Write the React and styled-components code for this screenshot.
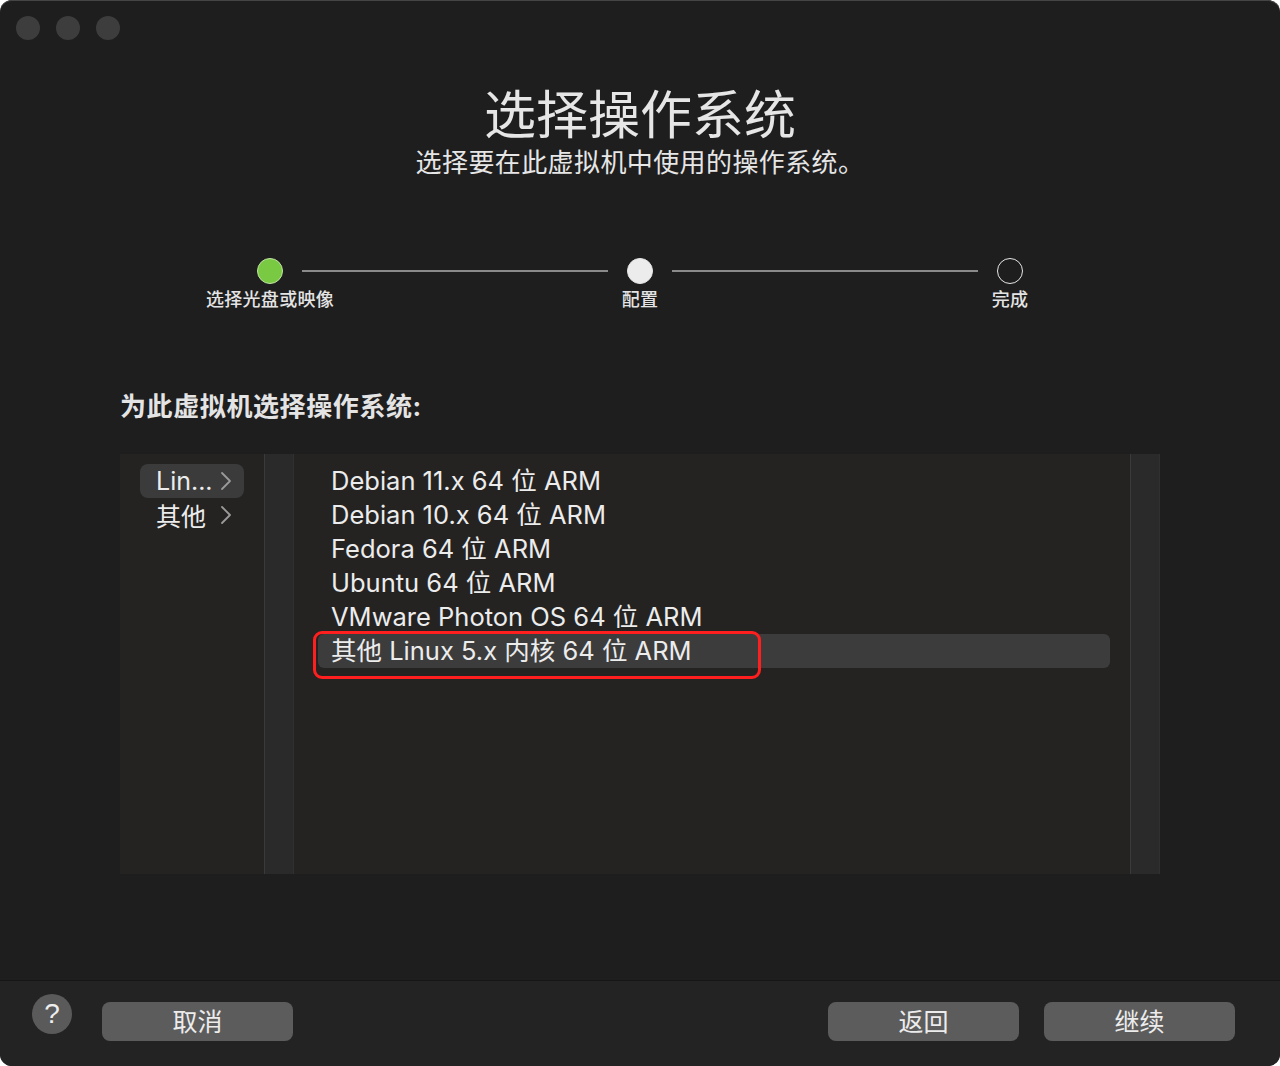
import React from "react";
import styled, { createGlobalStyle } from "styled-components";

const Global = createGlobalStyle`
  html, body { margin: 0; padding: 0; background: #ffffff; }
  body { font-family: Inter, "Noto Sans CJK SC", sans-serif; }
  * { box-sizing: border-box; }
`;

const Window = styled.div`
  width: 1280px;
  height: 1066px;
  background: #1e1e1e;
  border-radius: 12px;
  box-shadow: inset 0 1px 0 #454545;
  overflow: hidden;
  display: flex;
  flex-direction: column;
  color: #e4e4e4;
  font-family: Inter, "Noto Sans CJK SC", sans-serif;
`;

const TitleBar = styled.div`
  display: flex;
  gap: 16px;
  padding: 16px 0 0 16px;
  height: 56px;
`;

const Light = styled.span`
  width: 24px;
  height: 24px;
  border-radius: 50%;
  background: #3d3d3d;
`;

const Header = styled.div`
  display: flex;
  flex-direction: column;
  align-items: center;
  margin-top: 30px;
`;

const Title = styled.h1`
  margin: 0;
  font-size: 52px;
  line-height: 60px;
  font-weight: 400;
  color: #e6e6e6;
`;

const Subtitle = styled.div`
  font-size: 26px;
  line-height: 34px;
  letter-spacing: 0.4px;
  color: #e6e6e6;
`;

const Stepper = styled.div`
  width: 766px;
  margin: 78px auto 0;
  display: grid;
  grid-template-columns: 26px 1fr 26px 1fr 26px;
  row-gap: 4px;
`;

const Dot = styled.span`
  width: 26px;
  height: 26px;
  border-radius: 50%;
  background: ${(p) => (p.$state === "done" ? "#7ac943" : p.$state === "active" ? "#ececec" : "transparent")};
  border: 1.5px solid ${(p) => (p.$state === "done" ? "#bfe3a3" : "#e6e6e6")};
`;

const Line = styled.span`
  align-self: center;
  height: 2px;
  margin: 0 19px;
  background: #8a8a8a;
`;

const StepLabel = styled.span`
  display: flex;
  justify-content: center;
  white-space: nowrap;
  font-size: 18px;
  line-height: 24px;
  letter-spacing: 0.3px;
  font-weight: 500;
  color: #e4e4e4;
  grid-column: ${(p) => p.$col};
`;

const Heading = styled.div`
  width: 1040px;
  margin: 78px auto 0;
  font-size: 26px;
  line-height: 34px;
  letter-spacing: 0.6px;
  font-weight: 700;
  color: #e4e4e4;
`;

const Panel = styled.div`
  width: 1040px;
  height: 420px;
  margin: 30px auto 0;
  background: #242322;
  display: grid;
  grid-template-columns: 144px 30px 1fr 30px;
`;

const Sidebar = styled.div`
  padding: 10px 20px 0;
  display: flex;
  flex-direction: column;
`;

const SideItem = styled.div`
  width: 104px;
  height: 34px;
  padding: 0 12px 1px 16px;
  border-radius: 8px;
  display: flex;
  align-items: center;
  justify-content: space-between;
  font-size: 25px;
  background: ${(p) => (p.$selected ? "#3b3b3b" : "transparent")};
  color: #ececec;
`;

const Gutter = styled.div`
  background: #2a2a2a;
  border-left: 1px solid #3a3a3a;
  border-right: 1px solid #303030;
`;

const List = styled.div`
  padding: 10px 20px 0 24px;
  display: flex;
  flex-direction: column;
`;

const Row = styled.div`
  position: relative;
  height: 34px;
  padding: 0 0 5px 13px;
  display: flex;
  align-items: center;
  font-size: 25.5px;
  color: #ececec;
  border-radius: 6px;
  background: ${(p) => (p.$selected ? "#3c3c3c" : "transparent")};
`;

const Annotation = styled.span`
  position: absolute;
  left: -5px;
  top: -3px;
  width: 448px;
  height: 48px;
  border: 3px solid #ff1f1f;
  border-radius: 9px;
  pointer-events: none;
`;

const Footer = styled.div`
  margin-top: auto;
  height: 86px;
  border-top: 1px solid #161616;
  background: #232323;
  display: flex;
  align-items: flex-start;
  padding: 13px 45px 0 32px;
`;

const Help = styled.div`
  width: 40px;
  height: 40px;
  border-radius: 50%;
  background: #5a5a5a;
  display: flex;
  align-items: center;
  justify-content: center;
  font-size: 28px;
  color: #eeeeee;
  font-family: "Liberation Sans", Arial, sans-serif;
  margin-right: 30px;
`;

const Button = styled.button`
  width: 191px;
  height: 39px;
  margin-top: 8px;
  border: none;
  border-radius: 8px;
  background: #5d5c5c;
  color: #ececec;
  font-size: 25px;
  font-family: Inter, "Noto Sans CJK SC", sans-serif;
  padding: 0 0 5px;
  margin-left: ${(p) => p.$ml || "0"};
`;

const Spacer = styled.div`
  flex: 1;
`;

const Chevron = () => (
  <svg width="12" height="20" viewBox="0 0 12 20" fill="none">
    <path d="M2 2 L10 10 L2 18" stroke="#9a9a9a" strokeWidth="1.8" strokeLinecap="round" strokeLinejoin="round" />
  </svg>
);

const items = [
  "Debian 11.x 64 位 ARM",
  "Debian 10.x 64 位 ARM",
  "Fedora 64 位 ARM",
  "Ubuntu 64 位 ARM",
  "VMware Photon OS 64 位 ARM",
  "其他 Linux 5.x 内核 64 位 ARM",
];

export default function App() {
  return (
    <>
      <Global />
      <Window>
        <TitleBar>
          <Light />
          <Light />
          <Light />
        </TitleBar>
        <Header>
          <Title>选择操作系统</Title>
          <Subtitle>选择要在此虚拟机中使用的操作系统。</Subtitle>
        </Header>
        <Stepper>
          <Dot $state="done" />
          <Line />
          <Dot $state="active" />
          <Line />
          <Dot $state="todo" />
          <StepLabel $col={1}>选择光盘或映像</StepLabel>
          <StepLabel $col={3}>配置</StepLabel>
          <StepLabel $col={5}>完成</StepLabel>
        </Stepper>
        <Heading>为此虚拟机选择操作系统:</Heading>
        <Panel>
          <Sidebar>
            <SideItem $selected>
              <span>Lin...</span>
              <Chevron />
            </SideItem>
            <SideItem>
              <span>其他</span>
              <Chevron />
            </SideItem>
          </Sidebar>
          <Gutter />
          <List>
            {items.map((t, i) => (
              <Row key={t} $selected={i === 5}>
                {t}
                {i === 5 && <Annotation />}
              </Row>
            ))}
          </List>
          <Gutter />
        </Panel>
        <Footer>
          <Help>?</Help>
          <Button>取消</Button>
          <Spacer />
          <Button>返回</Button>
          <Button $ml="25px">继续</Button>
        </Footer>
      </Window>
    </>
  );
}
